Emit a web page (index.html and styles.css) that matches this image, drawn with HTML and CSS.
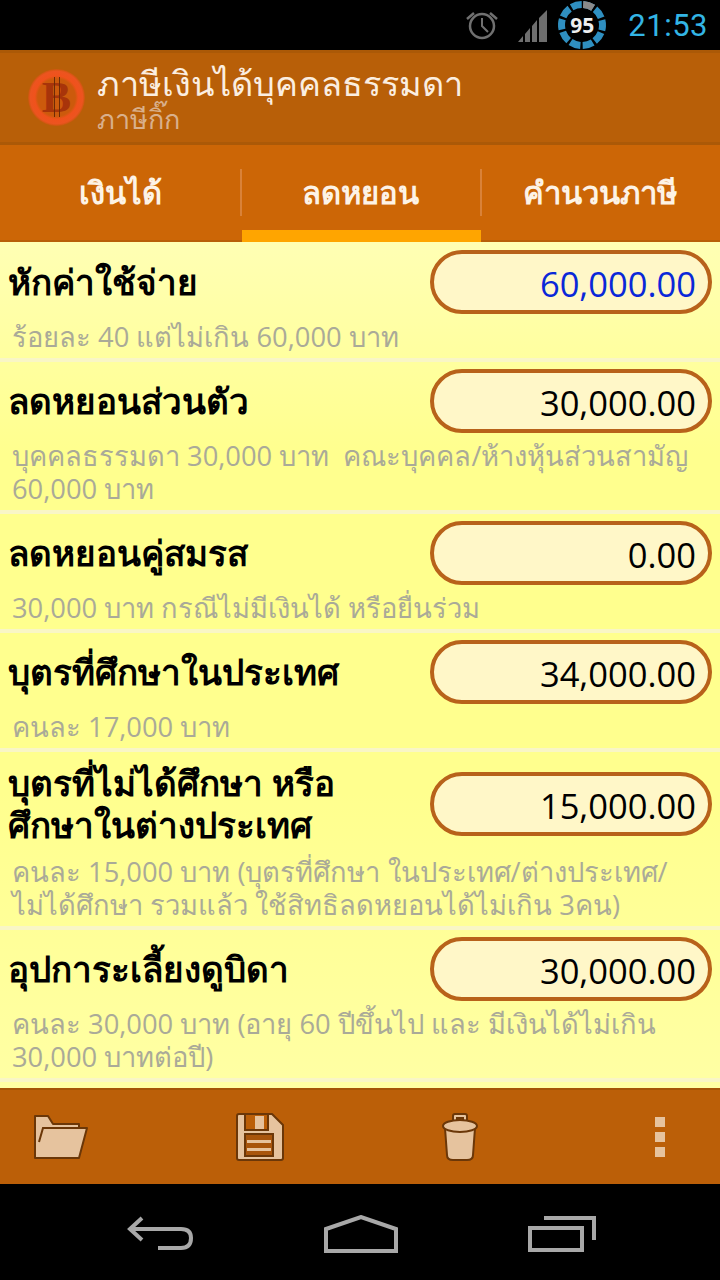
FILE: index.html
```html
<!DOCTYPE html>
<html lang="th">

<head>
    <meta charset="UTF-8">
    <title>ภาษีเงินได้บุคคลธรรมดา</title>
    <link rel="stylesheet" href="styles.css">
</head>

<body>
    <!-- status bar -->
    <div class="status">
        <svg class="ic-alarm" width="34" height="30" viewBox="0 0 34 30">
            <circle cx="17" cy="16" r="12" fill="none" stroke="#707070" stroke-width="2.5"/>
            <path d="M17 8v8l6 6" fill="none" stroke="#707070" stroke-width="2"/>
            <path d="M2 9l7-6M32 9l-7-6" fill="none" stroke="#707070" stroke-width="2.5"/>
        </svg>
        <svg class="ic-signal" width="30" height="32" viewBox="0 0 30 32">
            <path d="M0 32L5 26V32ZM7 24L12 18V32H7ZM14 16L19 10V32H14ZM21 8L29 0V32H21Z" fill="#6e6e6e"/>
        </svg>
        <div class="battery">
            <svg width="50" height="50" viewBox="0 0 50 50">
                <circle cx="25" cy="25" r="20.500" fill="none" stroke="#2f8fc0" stroke-width="7" stroke-dasharray="10.500 2.380" transform="rotate(-86.600 25 25)"/>
                <circle cx="25" cy="25" r="20.500" fill="none" stroke="#8a8a8a" stroke-width="7" stroke-dasharray="10.500 200" transform="rotate(-86.600 25 25)"/>
            </svg>
            <span class="battery-num">95</span>
        </div>
        <span class="clock">21:53</span>
    </div>

    <!-- header -->
    <div class="header">
        <div class="logo"><span class="logo-b">B</span></div>
        <div class="header-text">
            <div class="app-title">ภาษีเงินได้บุคคลธรรมดา</div>
            <div class="app-sub">ภาษีกิ๊ก</div>
        </div>
    </div>

    <div class="tabs">
        <div class="tab">เงินได้</div>
        <div class="tab active">ลดหยอน</div>
        <div class="tab">คำนวนภาษี</div>
    </div>

    <!-- list -->
    <div class="list">
        <div class="row first">
            <div class="head">
                <div class="name">หักค่าใช้จ่าย</div>
                <div class="field blue">60,000.00</div>
            </div>
            <div class="hint">ร้อยละ 40 แต่ไม่เกิน 60,000 บาท</div>
        </div>
        <div class="row">
            <div class="head">
                <div class="name">ลดหยอนส่วนตัว</div>
                <div class="field">30,000.00</div>
            </div>
            <div class="hint">บุคคลธรรมดา 30,000 บาท&nbsp; คณะบุคคล/ห้างหุ้นส่วนสามัญ<br>60,000 บาท</div>
        </div>
        <div class="row">
            <div class="head">
                <div class="name">ลดหยอนคู่สมรส</div>
                <div class="field">0.00</div>
            </div>
            <div class="hint">30,000 บาท กรณีไม่มีเงินได้ หรือยื่นร่วม</div>
        </div>
        <div class="row">
            <div class="head">
                <div class="name">บุตรที่ศึกษาในประเทศ</div>
                <div class="field">34,000.00</div>
            </div>
            <div class="hint">คนละ 17,000 บาท</div>
        </div>
        <div class="row">
            <div class="head tall">
                <div class="name">บุตรที่ไม่ได้ศึกษา หรือ<br>ศึกษาในต่างประเทศ</div>
                <div class="field">15,000.00</div>
            </div>
            <div class="hint">คนละ 15,000 บาท (บุตรที่ศึกษา ในประเทศ/ต่างประเทศ/<br>ไม่ได้ศึกษา รวมแล้ว ใช้สิทธิลดหยอนได้ไม่เกิน 3คน)</div>
        </div>
        <div class="row">
            <div class="head">
                <div class="name">อุปการะเลี้ยงดูบิดา</div>
                <div class="field">30,000.00</div>
            </div>
            <div class="hint">คนละ 30,000 บาท (อายุ 60 ปีขึ้นไป และ มีเงินได้ไม่เกิน<br>30,000 บาทต่อปี)</div>
        </div>
    </div>

    <!-- action bar -->
    <div class="actions">
        <svg class="ic-folder" width="56" height="46" viewBox="0 0 56 46">
            <path d="M2 2H15L20 10H46V14H54L46 44H2Z" fill="#e6c39e" stroke="#6b3708" stroke-width="2" stroke-linejoin="round"/>
            <path d="M6 28L10 14H54" fill="none" stroke="#6b3708" stroke-width="2"/>
        </svg>
        <svg width="48" height="50" viewBox="0 0 48 50">
            <path d="M3 2H36L47 13V46Q47 48 45 48H3Q1 48 1 46V4Q1 2 3 2Z" fill="#e6c39e" stroke="#6b3708" stroke-width="2" stroke-linejoin="round"/>
            <rect x="9" y="2" width="23" height="16" fill="#bb5f08" stroke="#6b3708" stroke-width="2"/>
            <rect x="19" y="4" width="9" height="13" fill="#e6c39e"/>
            <rect x="9" y="22" width="28" height="22" fill="#a8550c" stroke="#6b3708" stroke-width="2"/>
            <rect x="11" y="28" width="24" height="3" fill="#e6c39e"/>
            <rect x="11" y="36" width="24" height="3" fill="#e6c39e"/>
        </svg>
        <svg width="38" height="50" viewBox="0 0 38 50">
            <path d="M4 16L6 43Q6 48 12 48H26Q32 48 32 43L34 16Z" fill="#e6c39e" stroke="#6b3708" stroke-width="2"/>
            <path d="M12 10V4Q12 2 14 2H24Q26 2 26 4V10H22V6H16V10Z" fill="#e6c39e" stroke="#6b3708" stroke-width="2"/>
            <ellipse cx="19" cy="14" rx="17" ry="6" fill="#e6c39e" stroke="#6b3708" stroke-width="2"/>
        </svg>
        <div class="overflow"><i></i><i></i><i></i></div>
    </div>

    <!-- nav bar -->
    <div class="nav">
        <svg width="66" height="36" viewBox="0 0 66 36">
            <path d="M15 2L3 13L15 24" fill="none" stroke="#a8a8a8" stroke-width="4"/>
            <path d="M3 13H54Q64 13 64 22Q64 32 54 32H31" fill="none" stroke="#a8a8a8" stroke-width="4"/>
        </svg>
        <svg width="74" height="38" viewBox="0 0 74 38">
            <path d="M2 14L37 2L72 14V36H2Z" fill="none" stroke="#a8a8a8" stroke-width="4"/>
        </svg>
        <svg width="68" height="36" viewBox="0 0 68 36">
            <rect x="2" y="12" width="52" height="22" fill="none" stroke="#a8a8a8" stroke-width="4"/>
            <path d="M16 2H66V24" fill="none" stroke="#a8a8a8" stroke-width="4"/>
        </svg>
    </div>
</body>

</html>
```
FILE: styles.css
```css
* {
    box-sizing: border-box;
}

body {
    margin: 0;
    width: 720px;
    height: 1280px;
    overflow: hidden;
    background: #000;
    font-family: "Open Sans", "Noto Sans", "Noto Sans CJK SC", sans-serif;
}

/* status bar */

.status {
    height: 50px;
    background: #000;
    display: flex;
    align-items: center;
    justify-content: flex-end;
    padding-right: 12px;
}

.ic-alarm {
    margin-right: 19px;
}

.ic-signal {
    margin-top: 2px;
    margin-right: 9px;
}

.battery {
    width: 50px;
    height: 50px;
    position: relative;
    margin-right: 21px;
}

.battery-num {
    position: absolute;
    top: 0;
    left: 0;
    width: 50px;
    line-height: 50px;
    text-align: center;
    color: #eee;
    font-size: 21px;
    font-weight: 700;
}

.clock {
    color: #33b5e5;
    font-family: Roboto, sans-serif;
    font-size: 31px;
    letter-spacing: 0.5px;
}

/* header */

.header {
    height: 95px;
    background: #b85f08;
    border-top: 3px solid #ab5907;
    border-bottom: 3px solid #ab5907;
    display: flex;
    align-items: center;
    padding-left: 28px;
}

.logo {
    width: 57px;
    height: 57px;
    border-radius: 50%;
    background: radial-gradient(circle closest-side, #cc5a0c 66%, #f0521c 76%, #ec5420 92%, #c9580c);
    display: flex;
    align-items: center;
    justify-content: center;
    margin-right: 12px;
}

.logo-b {
    position: relative;
    color: #a8340a;
    font-family: "Liberation Serif", serif;
    font-weight: 700;
    font-size: 44px;
    line-height: 44px;
}

/* the two bars of the baht sign */
.logo-b::after {
    content: "";
    position: absolute;
    left: 12px;
    top: 1px;
    width: 4px;
    height: 40px;
    border-left: 1px solid #6e2a06;
    border-right: 1px solid #6e2a06;
}

.app-title {
    color: #fbeee0;
    font-size: 34.300px;
    line-height: 42px;
}

.app-sub {
    color: #d9b08c;
    font-size: 27px;
    line-height: 30px;
}

/* tabs */

.tabs {
    height: 97px;
    background: #cc6606;
    display: flex;
    border-bottom: 2px solid #b85f08;
}

.tab {
    flex: 1;
    display: flex;
    align-items: center;
    justify-content: center;
    color: #fdf3e6;
    font-size: 31px;
    font-weight: 700;
    position: relative;
}

.tab + .tab::before {
    content: "";
    position: absolute;
    left: 0;
    top: 24px;
    bottom: 24px;
    width: 2px;
    background: #d98238;
}

.tab.active::after {
    content: "";
    position: absolute;
    left: 2px;
    right: -1px;
    bottom: -2px;
    height: 12px;
    background: #ffa500;
}

/* list */

.list {
    height: 846px;
    overflow: hidden;
    background: linear-gradient(#ffffb4, #ffff8e 25%, #ffff8e 65%, #ffffa4);
}

.row {
    padding: 7px 0 5px;
    border-bottom: 4px solid #f9f6c6;
}

.row.first {
    padding-top: 8px;
}

.head {
    display: flex;
    align-items: center;
    justify-content: space-between;
    padding-left: 8px;
    padding-right: 8px;
    margin-bottom: 6px;
}

.head.tall {
    min-height: 90px;
}

.name {
    color: #000;
    font-size: 35px;
    font-weight: 700;
    line-height: 42px;
}

.field {
    width: 282px;
    height: 64px;
    flex-shrink: 0;
    border: 4px solid #b8621a;
    border-radius: 32px;
    background: #fff7c8;
    text-align: right;
    padding-right: 12px;
    color: #000;
    font-size: 34.500px;
    line-height: 60px;
}

.field.blue {
    color: #0a28d8;
}

.hint {
    color: #aaaa98;
    font-size: 27.300px;
    line-height: 33px;
    padding-left: 12px;
}

/* action bar */

.actions {
    height: 96px;
    background: #bb5f08;
    border-top: 2px solid #a55407;
    display: grid;
    grid-template-columns: repeat(4, 120px);
    column-gap: 80px;
    justify-items: center;
    align-items: center;
}

.ic-folder {
    margin-left: 2px;
}

.overflow {
    display: flex;
    flex-direction: column;
    gap: 5px;
}

.overflow i {
    display: block;
    width: 10px;
    height: 10px;
    background: #e6c39e;
}

/* nav bar */

.nav {
    height: 96px;
    background: #000;
    display: flex;
    align-items: center;
    justify-content: space-between;
    padding: 4px 124px 0 127px;
}
```
